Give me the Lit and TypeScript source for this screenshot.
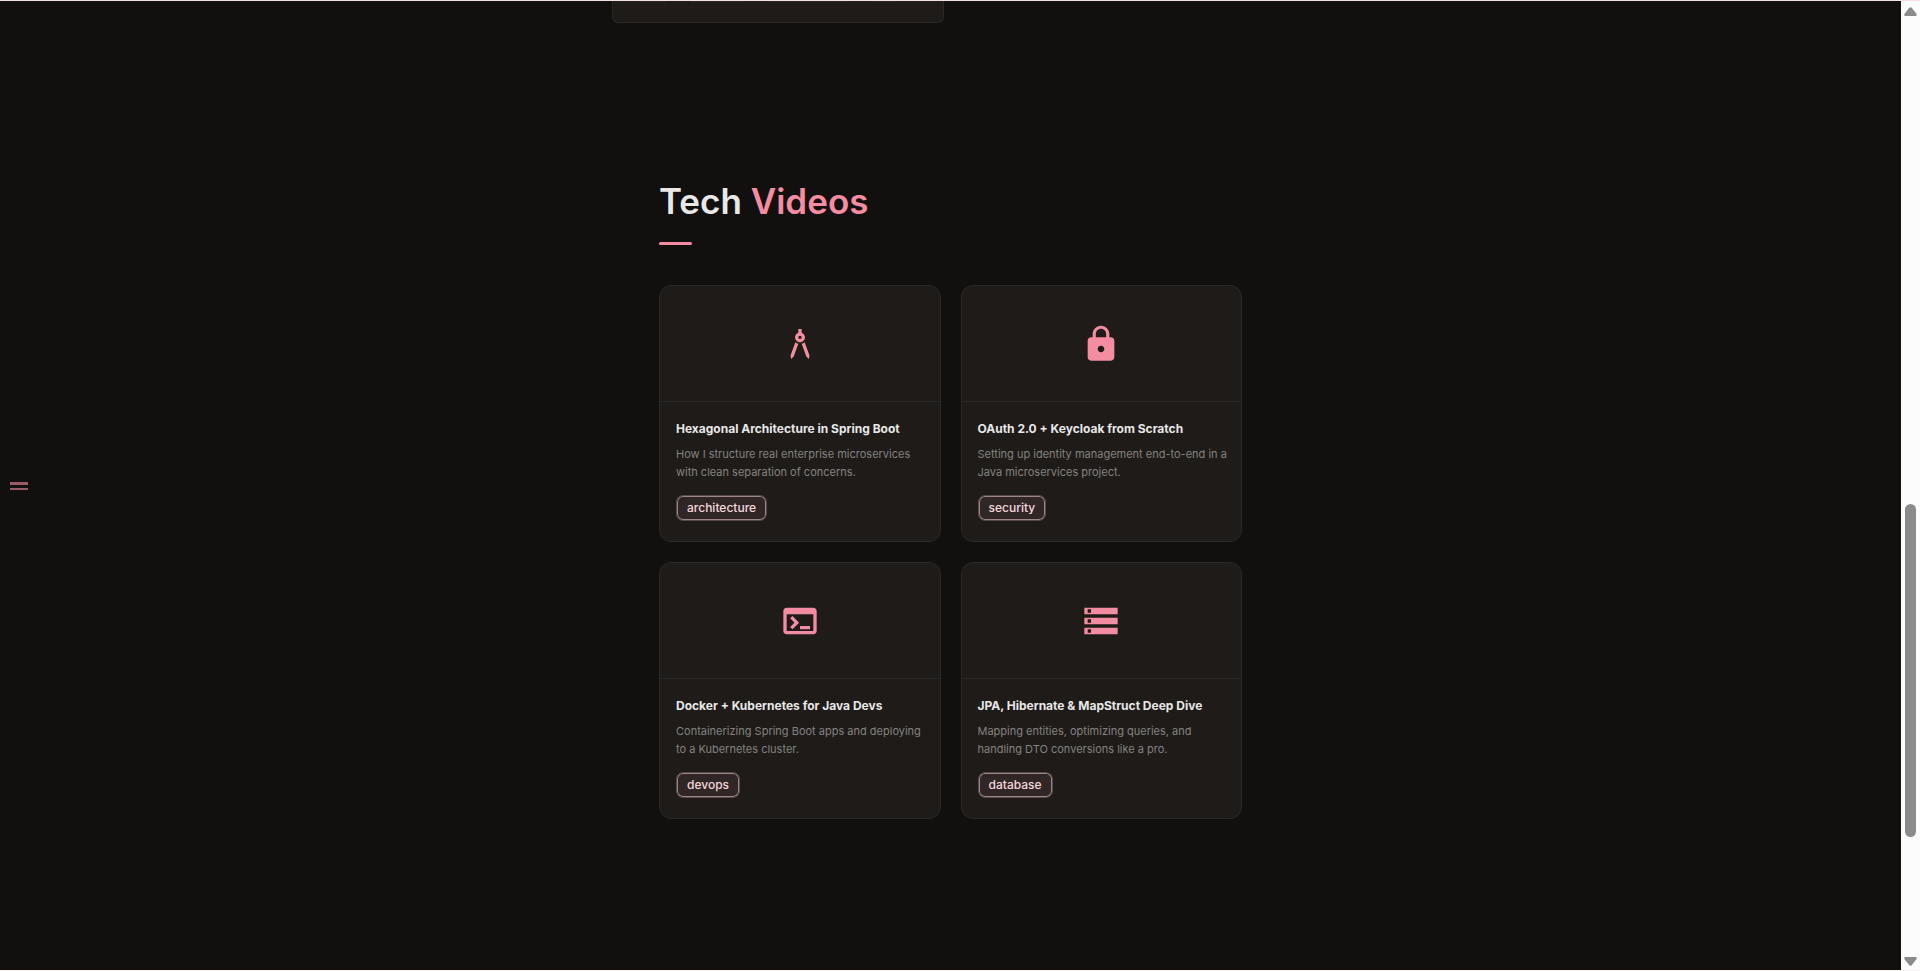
import { LitElement, html, css, svg } from "lit";
import { customElement, property } from "lit/decorators.js";

interface Video {
  title: string;
  text: string;
  tag: string;
  icon: string;
}

const ICONS: Record<string, string> = {
  compass:
    "M6.36 18.78 6.61 21l1.62-1.54 2.77-7.6c-.68-.17-1.28-.51-1.77-.98l-2.87 7.9zM14.77 10.88c-.49.47-1.1.81-1.77.98l2.77 7.6L17.39 21l.26-2.22-2.88-7.9zM15 8c0-1.3-.84-2.4-2-2.82V3h-2v2.18C9.84 5.6 9 6.7 9 8c0 1.66 1.34 3 3 3s3-1.34 3-3zm-3 1c-.55 0-1-.45-1-1s.45-1 1-1 1 .45 1 1-.45 1-1 1z",
  lock:
    "M18 8h-1V6c0-2.76-2.24-5-5-5S7 3.24 7 6v2H6c-1.1 0-2 .9-2 2v10c0 1.1.9 2 2 2h12c1.1 0 2-.9 2-2V10c0-1.1-.9-2-2-2zm-6 9c-1.1 0-2-.9-2-2s.9-2 2-2 2 .9 2 2-.9 2-2 2zm3.1-9H8.9V6c0-1.71 1.39-3.1 3.1-3.1s3.1 1.39 3.1 3.1v2z",
  terminal:
    "M20 4H4c-1.11 0-2 .9-2 2v12c0 1.1.89 2 2 2h16c1.1 0 2-.9 2-2V6c0-1.1-.89-2-2-2zm0 14H4V8h16v10zm-2-1h-6v-2h6v2zM7.5 17l-1.41-1.41L8.67 13l-2.59-2.59L7.5 9l4 4-4 4z",
  storage:
    "M2 20h20v-4H2v4zm2-3h2v2H4v-2zM2 4v4h20V4H2zm4 3H4V5h2v2zm-4 7h20v-4H2v4zm2-3h2v2H4v-2z",
};

const VIDEOS: Video[] = [
  {
    title: "Hexagonal Architecture in Spring Boot",
    text: "How I structure real enterprise microservices with clean separation of concerns.",
    tag: "architecture",
    icon: "compass",
  },
  {
    title: "OAuth 2.0 + Keycloak from Scratch",
    text: "Setting up identity management end-to-end in a Java microservices project.",
    tag: "security",
    icon: "lock",
  },
  {
    title: "Docker + Kubernetes for Java Devs",
    text: "Containerizing Spring Boot apps and deploying to a Kubernetes cluster.",
    tag: "devops",
    icon: "terminal",
  },
  {
    title: "JPA, Hibernate & MapStruct Deep Dive",
    text: "Mapping entities, optimizing queries, and handling DTO conversions like a pro.",
    tag: "database",
    icon: "storage",
  },
];

@customElement("video-card")
export class VideoCard extends LitElement {
  @property({ attribute: false }) video!: Video;

  static styles = css`
    :host {
      display: block;
    }
    .card {
      box-sizing: border-box;
      height: 100%;
      overflow: hidden;
      border: 1px solid #2b2928;
      border-radius: 12px;
      background: #1e1b18;
    }
    .media {
      display: flex;
      align-items: center;
      justify-content: center;
      height: 115px;
      border-bottom: 1px solid #2b2928;
    }
    .icon {
      width: 40px;
      height: 40px;
      fill: #f48ca2;
    }
    .body {
      padding: 16px 12px 20px 16px;
    }
    .title {
      margin: 0;
      font-size: 12px;
      font-weight: 700;
      line-height: 22px;
      color: #e8e8e8;
    }
    .text {
      margin: 5px 0 14px;
      font-size: 11px;
      line-height: 18px;
      color: #858381;
    }
    .tag {
      display: block;
      box-sizing: border-box;
      width: fit-content;
      padding: 1px 10px;
      border: 1px solid #57484a;
      border-radius: 7px;
      background: #312626;
      box-shadow: inset 0 0 0 1px #9b878b;
      font-size: 12px;
      font-weight: 500;
      line-height: 22px;
      color: #f5d9de;
    }
  `;

  render() {
    const { title, text, tag, icon } = this.video;
    return html`
      <article class="card">
        <div class="media">
          <svg class="icon" viewBox="0 0 24 24" aria-hidden="true">
            ${svg`<path d=${ICONS[icon]}></path>`}
          </svg>
        </div>
        <div class="body">
          <h3 class="title">${title}</h3>
          <p class="text">${text}</p>
          <span class="tag">${tag}</span>
        </div>
      </article>
    `;
  }
}

@customElement("app-root")
export class AppRoot extends LitElement {
  static styles = css`
    :host {
      display: grid;
      grid-template-columns: minmax(0, 1fr) 19px;
      box-sizing: border-box;
      height: 100vh;
      overflow: hidden;
      border-top: 1px solid #f6dfe1;
      border-bottom: 1px solid #fbf1f1;
      background: #11100e;
      font-family: Inter, "Liberation Sans", sans-serif;
    }
    .page {
      display: grid;
      grid-template-columns: 1fr minmax(0, 677px) 1fr;
      align-items: start;
      min-width: 0;
    }
    .menu {
      display: flex;
      flex-direction: column;
      gap: 3px;
      align-self: center;
      justify-self: start;
      padding: 6px 10px;
      border: 0;
      background: none;
      cursor: pointer;
    }
    .bar {
      width: 18px;
      height: 3px;
      background: #985c68;
    }
    .bar.thin {
      height: 2px;
    }
    .previous {
      display: flex;
      align-items: start;
      gap: 24px;
      box-sizing: border-box;
      width: 332px;
      height: 22px;
      padding: 0 46px 0 27px;
      border: 1px solid #2b2928;
      border-top: 0;
      border-radius: 0 0 6px 6px;
      background: #1e1b18;
    }
    .edge {
      flex: 1 1 0;
      height: 1px;
      background: #2b2726;
    }
    .edge.wide {
      flex-grow: 2;
    }
    .edge.widest {
      flex-grow: 3;
    }
    .videos {
      padding: 156px 47px 0;
    }
    .heading {
      margin: 0;
      font-size: 35px;
      font-weight: 600;
      line-height: 44px;
      color: #e8e8e8;
    }
    .accent {
      color: #f48ca2;
    }
    .rule {
      width: 33px;
      height: 3px;
      margin: 19px 0 40px;
      border-radius: 2px;
      background: #f48ca2;
    }
    .grid {
      display: grid;
      grid-template-columns: repeat(2, minmax(0, 1fr));
      gap: 20px;
    }
    .scroll {
      display: flex;
      flex-direction: column;
      align-items: center;
      box-sizing: border-box;
      padding: 6px 0 4px;
      background: #fcfcfc;
    }
    .arrow {
      width: 13px;
      height: 9px;
      fill: #8b8b8b;
    }
    .before {
      flex: 487 1 0;
    }
    .thumb {
      flex: 333 1 0;
      width: 11px;
      border-radius: 6px;
      background: #8b8b8b;
    }
    .after {
      flex: 120 1 0;
    }
  `;

  render() {
    return html`
      <div class="page">
        <button class="menu" aria-label="Menu">
          <span class="bar"></span>
          <span class="bar thin"></span>
        </button>
        <main>
          <div class="previous">
            <span class="edge"></span>
            <span class="edge wide"></span>
            <span class="edge widest"></span>
            <span class="edge"></span>
          </div>
          <section class="videos">
            <h2 class="heading">Tech <span class="accent">Videos</span></h2>
            <div class="rule"></div>
            <div class="grid">
              ${VIDEOS.map((v) => html`<video-card .video=${v}></video-card>`)}
            </div>
          </section>
        </main>
      </div>
      <div class="scroll" aria-hidden="true">
        <svg class="arrow" viewBox="0 0 13 9">
          <path d="M5.3.7Q6.500-.4 7.700.7L12.600 7Q13.200 9 11.500 9H1.500Q-.2 9 .4 7Z"></path>
        </svg>
        <span class="before"></span>
        <span class="thumb"></span>
        <span class="after"></span>
        <svg class="arrow" viewBox="0 0 13 9">
          <path d="M5.300 8.300Q6.500 9.400 7.700 8.300L12.600 2Q13.200 0 11.500 0H1.500Q-.2 0 .4 2Z"></path>
        </svg>
      </div>
    `;
  }
}
